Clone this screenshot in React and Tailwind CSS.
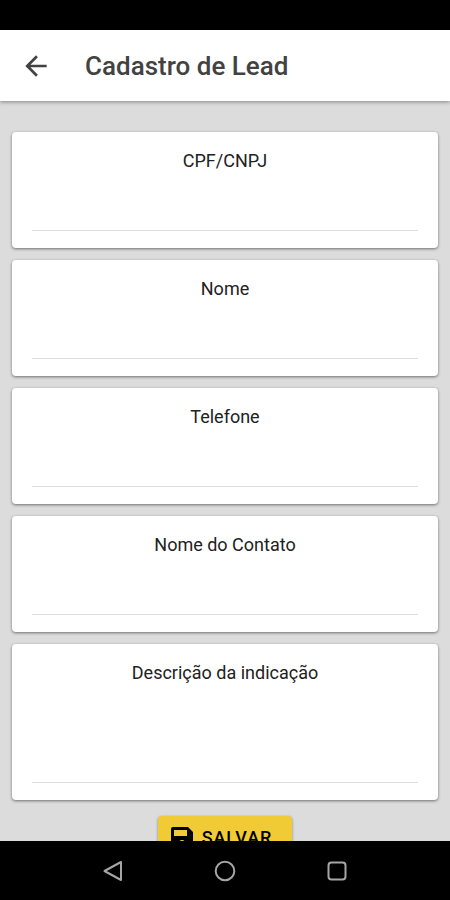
import React, { useState } from "react";

const FIELDS = [
  { name: "document", label: "CPF/CNPJ" },
  { name: "name", label: "Nome" },
  { name: "phone", label: "Telefone" },
  { name: "contact", label: "Nome do Contato" },
  { name: "description", label: "Descrição da indicação", multiline: true },
];

const BackIcon = () => (
  <svg width="32" height="32" viewBox="0 0 24 24" fill="#424242">
    <path d="M20 11H7.83l5.59-5.59L12 4l-8 8 8 8 1.41-1.41L7.83 13H20v-2z" />
  </svg>
);

// Filled floppy, the slot and the hub are cut out of the body
const SaveIcon = () => (
  <svg width="22" height="22" viewBox="0 0 22 22" fill="#000" fillRule="evenodd">
    <path d="M2 0h15l5 5v15a2 2 0 0 1-2 2H2a2 2 0 0 1-2-2V2a2 2 0 0 1 2-2zM3 3v6h13V3zM11 13a3 3 0 1 0 0 6 3 3 0 0 0 0-6z" />
  </svg>
);

const Field = ({ field, value, onChange }) => {
  const inputClass = "block w-full resize-none bg-transparent border-b border-[#dedede] text-center text-base outline-none";

  return (
    <div className="bg-white rounded px-5 py-[17px] shadow-[0_1px_3px_rgba(0,0,0,0.5)]">
      <label htmlFor={field.name} className="block text-center text-lg leading-6 text-[#212121]">
        {field.label}
      </label>
      {field.multiline ? (
        <textarea id={field.name} value={value} onChange={onChange} className={`${inputClass} h-[98px] pt-6`} />
      ) : (
        <input id={field.name} type="text" value={value} onChange={onChange} className={`${inputClass} h-[58px] pt-6`} />
      )}
    </div>
  );
};

const App = () => {
  const [formData, setFormData] = useState({ document: "", name: "", phone: "", contact: "", description: "" });

  const handleSubmit = (e) => {
    e.preventDefault();
  };

  return (
    <div className="flex h-screen flex-col bg-[#dcdcdc] font-['Roboto',sans-serif]">
      <div className="h-[30px] shrink-0 bg-black" />

      <header className="z-10 flex h-[71px] shrink-0 items-center gap-[33px] bg-white px-5 shadow-[0_1px_4px_rgba(0,0,0,0.4)]">
        <button type="button" aria-label="Voltar"><BackIcon /></button>
        <h1 className="text-[26px] leading-8 font-medium text-[#424242]">Cadastro de Lead</h1>
      </header>

      <main className="min-h-0 flex-1 overflow-y-auto [scrollbar-width:none]">
        <form onSubmit={handleSubmit} className="flex flex-col gap-3 px-3 pt-[31px] pb-6">
          {FIELDS.map((field) => (
            <Field
              key={field.name}
              field={field}
              value={formData[field.name]}
              onChange={(e) => setFormData({ ...formData, [field.name]: e.target.value })}
            />
          ))}
          <button type="submit" className="mt-1 flex h-[44px] items-center gap-[9px] self-center rounded bg-[#f1cb35] pl-[13px] pr-5 text-lg font-medium tracking-wider text-black shadow-[0_1px_3px_rgba(0,0,0,0.4)]">
            <SaveIcon /> SALVAR
          </button>
        </form>
      </main>

      <nav className="flex h-[59px] shrink-0 items-center justify-center gap-[88px] bg-black">
        <button type="button" aria-label="Voltar ao anterior">
          <svg width="24" height="24" viewBox="0 0 24 24" fill="none" stroke="#a6a6a6" strokeWidth="2" strokeLinejoin="round">
            <path d="M20 3v18L3.500 12z" />
          </svg>
        </button>
        <button type="button" aria-label="Início">
          <svg width="24" height="24" viewBox="0 0 24 24" fill="none" stroke="#a6a6a6" strokeWidth="2">
            <circle cx="12" cy="12" r="9.300" />
          </svg>
        </button>
        <button type="button" aria-label="Recentes">
          <svg width="24" height="24" viewBox="0 0 24 24" fill="none" stroke="#a6a6a6" strokeWidth="2">
            <rect x="3.500" y="3.500" width="17" height="17" rx="3" />
          </svg>
        </button>
      </nav>
    </div>
  );
};

export default App;
